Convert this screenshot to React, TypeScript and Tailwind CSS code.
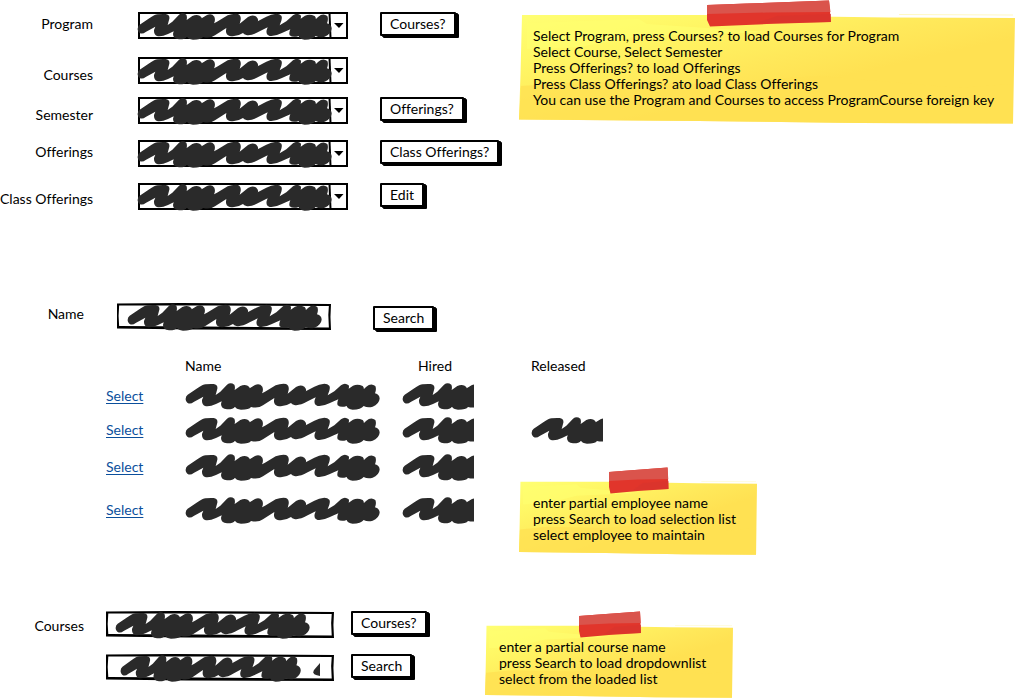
import type { ReactNode } from "react";

const SCRIBBLE =
  "M14 58 Q14 50 20 46 L50 26 Q65 16 74 15 Q88 13 98 14 Q111 16 109 28 L104 47 L118 37 L138 16 Q149 8 160 16 Q163 22 161 32 L178 20 Q190 14 200 19 Q207 23 206 27 L222 17 Q236 11 244 22 Q248 32 243 42 L252 37 L284 18 Q300 12 315 14 Q325 18 323 32 L320 43 L345 23 Q358 14 370 22 Q378 30 374 36 L400 22 Q414 14 430 13 Q440 13 445 19 Q448 24 445 34 L440 48 L460 36 L480 18 Q492 8 503 18 Q505 22 503 28 L516 19 Q530 13 545 20 Q550 26 548 30 L556 22 Q570 10 583 20 Q587 30 582 42 Q596 46 596 58 Q594 74 575 82 Q560 86 548 80 Q540 91 515 91 Q500 90 497 80 Q480 86 470 78 Q467 70 472 60 L445 72 Q425 82 410 80 Q398 76 401 62 L404 54 L380 66 Q355 80 340 77 Q333 75 330 71 Q310 84 290 80 Q278 76 279 64 L280 56 L246 78 Q232 88 210 83 Q205 91 180 91 Q165 89 162 82 Q155 91 138 90 Q120 88 120 74 L122 66 L105 74 Q85 83 72 80 Q62 76 63 62 L67 52 L38 68 Q28 76 19 70 Q13 65 14 58 Z";

function Scribble({ className = "", short = false }: { className?: string; short?: boolean }) {
  return (
    <svg
      aria-hidden="true"
      className={`pointer-events-none block ${className}`}
      viewBox={short ? "12 8 216 84" : "12 8 588 84"}
      preserveAspectRatio="none"
    >
      <path d={SCRIBBLE} fill="#2a2a2a" />
    </svg>
  );
}

function BoxOutline() {
  return (
    <svg
      aria-hidden="true"
      className="pointer-events-none absolute inset-0 size-full"
      viewBox="0 0 200 27"
      preserveAspectRatio="none"
    >
      <path d="M0 0.5 L60 0 L200 1 L199.5 14 L200 27 L70 26.5 L0 25.5 Z M2 2.5 L1.5 13 L2 23 L80 23.5 L198 24.5 L197.5 12 L198 3 L90 2.5 Z" fill="#000" fillRule="evenodd" />
    </svg>
  );
}

function SketchButton({ children }: { children: ReactNode }) {
  return (
    <button
      type="button"
      className="h-6 w-fit whitespace-nowrap rounded-[1px] border-2 border-black bg-white px-2 leading-5 shadow-[2px_1px_0_#000,3px_2px_0_#000]"
    >
      {children}
    </button>
  );
}

function Dropdown({ id }: { id: string }) {
  return (
    <div className="relative h-[27px] w-[210px]">
      <select id={id} className="size-full appearance-none border-2 border-black bg-white">
        <option value="" />
      </select>
      <svg aria-hidden="true" className="pointer-events-none absolute top-0 right-0 h-[27px] w-5" viewBox="0 0 20 27">
        <path d="M1.5 1 L2.5 26" stroke="#000" strokeWidth="2" fill="none" />
        <path d="M6 11 H15.5 L11 16 Z" fill="#000" />
      </svg>
      <Scribble className="absolute top-0 -left-px h-7 w-[196px]" />
    </div>
  );
}

function TextBox({ id, label, className, children }: { id: string; label?: string; className: string; children: ReactNode }) {
  return (
    <div className={`relative h-[27px] ${className}`}>
      <input id={id} type="text" aria-label={label} className="size-full bg-white px-3" />
      <BoxOutline />
      {children}
    </div>
  );
}

function StickyNote({ id, lines, className }: { id: string; lines: string[]; className: string }) {
  return (
    <aside className={`pr-4 pl-[14px] ${className}`}>
      <svg
        aria-hidden="true"
        className="absolute inset-x-0 top-[14px] h-[calc(100%-14px)] w-full"
        viewBox="0 0 496 110"
        preserveAspectRatio="none"
      >
        <defs>
          <linearGradient id={`${id}-paper`} x1="0" y1="0" x2="0.62" y2="0.6">
            <stop offset="0" stopColor="#ffff73" />
            <stop offset="0.35" stopColor="#fff765" />
            <stop offset="0.75" stopColor="#ffe85a" />
            <stop offset="1" stopColor="#ffe152" />
          </linearGradient>
        </defs>
        <path d="M3 1 L190 1 L370 3.5 L496 4 L494 109.5 L340 109 L180 107 L0 105.5 L1.5 60 Z" fill={`url(#${id}-paper)`} />
        <path d="M2 72 L60 68 L180 70 L300 62 L440 74 L494 70 L494 109.5 L340 109 L180 107 L0 105.5 Z" fill="#ffe152" opacity="0.8" />
        <path d="M8 9 L120 5 L128 10 L250 18 L120 22 L60 33 L8 35 Z" fill="#ffff70" opacity="0.6" />
        <path d="M380 0.5 L494 1" stroke="#fff9c4" strokeWidth="1" />
      </svg>
      <svg
        aria-hidden="true"
        className="absolute top-0 left-[38%] h-[27px] w-1/4"
        viewBox="0 0 124 27"
        preserveAspectRatio="none"
      >
        <path d="M0 5 L40 3.5 L122 0.5 L124 22 L60 24 L3 26.5 L0 20 Z" fill="#e1352b" />
        <path d="M0 5 L40 3.5 L122 0.5 L123.5 12 L60 12.5 L0 14 Z" fill="#da544c" />
        <path d="M50 23 L70 16 L124 14 L124 22 Z" fill="#d8342d" opacity="0.7" />
      </svg>
      <p className="relative whitespace-nowrap leading-4">
        {lines.map((line) => (
          <span key={line} className="block">
            {line}
          </span>
        ))}
      </p>
    </aside>
  );
}

const filters = [
  { id: "program", label: "Program", action: "Courses?", spacing: "", labelSpacing: "pb-1" },
  { id: "courses", label: "Courses", action: "", spacing: "mt-[18px]", labelSpacing: "pt-2" },
  { id: "semester", label: "Semester", action: "Offerings?", spacing: "mt-[13px]", labelSpacing: "pt-2" },
  { id: "offerings", label: "Offerings", action: "Class Offerings?", spacing: "mt-4", labelSpacing: "pb-1" },
  { id: "class-offerings", label: "Class Offerings", action: "Edit", spacing: "mt-4", labelSpacing: "pt-1" },
];

const employees = [
  { id: 1, height: "h-[34px]", released: false },
  { id: 2, height: "h-[34px]", released: true },
  { id: 3, height: "h-10", released: false },
  { id: 4, height: "h-[46px]", released: false },
];

export default function App() {
  return (
    <main className="bg-white font-['Lato',sans-serif] text-[14px] leading-4 text-black [font-variant-ligatures:none]">
      <section className="flex items-start">
        <div className="w-[519px] shrink-0 pt-3">
          {filters.map((f) => (
            <div key={f.id} className={`flex h-[27px] items-center ${f.spacing}`}>
              <label htmlFor={f.id} className={`mr-[45px] w-[93px] whitespace-nowrap text-right ${f.labelSpacing}`}>
                {f.label}
              </label>
              <Dropdown id={f.id} />
              <div className="ml-8 flex self-start">{f.action && <SketchButton>{f.action}</SketchButton>}</div>
            </div>
          ))}
        </div>
        <StickyNote
          id="catalog"
          className="relative mr-px grow pt-7 pb-4"
          lines={[
            "Select Program, press Courses? to load Courses for Program",
            "Select Course, Select Semester",
            "Press Offerings? to load Offerings",
            "Press Class Offerings? ato load Class Offerings",
            "You can use the Program and Courses to access ProgramCourse foreign key",
          ]}
        />
      </section>

      <section className="relative mt-[93px]">
        <div className="flex items-start">
          <label htmlFor="employee-name" className="mr-[33px] w-[84px] pt-[3px] text-right">
            Name
          </label>
          <TextBox id="employee-name" className="w-[214px]">
            <Scribble className="absolute top-0 left-[10px] h-7 w-[196px]" />
          </TextBox>
          <div className="ml-[42px] flex pt-[3px]">
            <SketchButton>Search</SketchButton>
          </div>
        </div>

        <table className="mt-[23px] ml-[106px] w-[509px] table-fixed border-collapse text-left">
          <colgroup>
            <col className="w-[79px]" />
            <col className="w-[217px]" />
            <col className="w-[129px]" />
            <col className="w-[84px]" />
          </colgroup>
          <thead>
            <tr className="h-[26px]">
              <td />
              <th scope="col" className="font-normal">Name</th>
              <th scope="col" className="pl-4 font-normal">Hired</th>
              <th scope="col" className="font-normal">Released</th>
            </tr>
          </thead>
          <tbody>
            {employees.map((e) => (
              <tr key={e.id} className={e.height}>
                <td>
                  <a href="#employee" className="text-[#0b4f9c] underline underline-offset-2">
                    Select
                  </a>
                </td>
                <td>
                  <Scribble className="h-7 w-[196px]" />
                </td>
                <td>
                  <Scribble short className="h-7 w-[72px]" />
                </td>
                <td>{e.released && <Scribble short className="h-7 w-[72px]" />}</td>
              </tr>
            ))}
          </tbody>
        </table>

        <StickyNote
          id="employee"
          className="absolute top-[164px] left-[519px] w-[238px] pt-7 pb-3"
          lines={["enter partial employee name", "press Search to load selection list", "select employee to maintain"]}
        />
      </section>

      <section className="mt-[78px] flex items-start">
        <label htmlFor="course-name" className="mr-[22px] w-[84px] shrink-0 pt-[7px] text-right">
          Courses
        </label>
        <div className="flex w-[379px] shrink-0 flex-col gap-4">
          <div className="flex items-start gap-[17px]">
            <TextBox id="course-name" className="w-[228px]">
              <Scribble className="absolute top-0 left-[9px] h-7 w-[196px]" />
            </TextBox>
            <SketchButton>Courses?</SketchButton>
          </div>
          <div className="flex items-start gap-[17px]">
            <TextBox id="course-search" label="Course search" className="w-[228px]">
              <Scribble className="absolute top-0 left-[14px] h-7 w-[182px]" />
              <svg aria-hidden="true" className="pointer-events-none absolute top-[9px] left-[207px] h-[13px] w-[7px]" viewBox="0 0 7 13">
                <path d="M7 0 L1 7 Q-1 11 3 12 L7 13 Z" fill="#2a2a2a" />
              </svg>
            </TextBox>
            <SketchButton>Search</SketchButton>
          </div>
        </div>
        <StickyNote
          id="course"
          className="relative w-[248px] pt-7 pb-[11px]"
          lines={["enter a partial course name", "press Search to load dropdownlist", "select from the loaded list"]}
        />
      </section>
    </main>
  );
}
